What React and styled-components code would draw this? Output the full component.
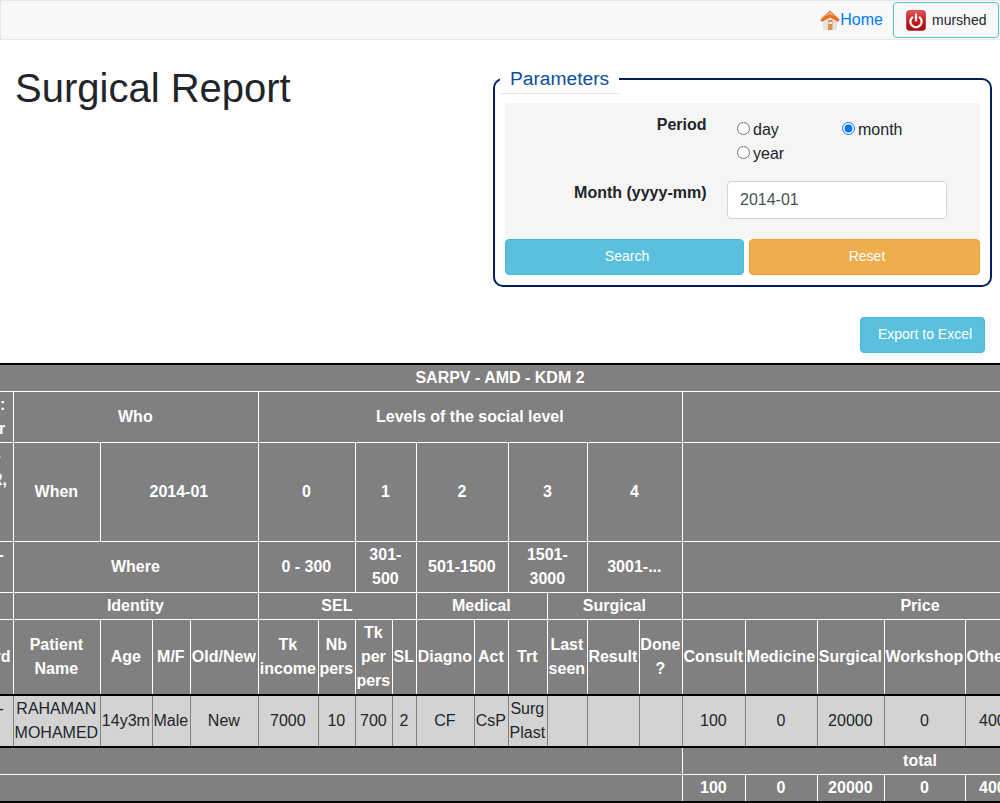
import React from 'react';
import styled, { createGlobalStyle } from 'styled-components';

const GlobalStyle = createGlobalStyle`
  html, body {
    margin: 0;
    height: 100%;
    overflow: hidden;
    background: #fff;
  }
  body {
    font-family: "Liberation Sans", Arial, sans-serif;
    font-size: 16px;
    line-height: 24px;
    color: #212529;
  }
  * {
    box-sizing: border-box;
  }
`;

const NavBar = styled.nav`
  display: flex;
  justify-content: flex-end;
  align-items: center;
  height: 40px;
  padding-right: 1px;
  background: #f8f8f8;
  border: 1px solid #e7e7e7;
  border-right: 0;
`;

const HomeLink = styled.a`
  display: flex;
  align-items: center;
  color: #007bff;
  margin-right: 10px;
`;

const UserButton = styled.button`
  display: flex;
  align-items: center;
  gap: 6px;
  width: 106px;
  height: 36px;
  padding: 0 0 0 12px;
  background: #f8f8f8;
  border: 1px solid #5bc0de;
  border-radius: 4px;
  font: 14px/20px "Liberation Sans", Arial, sans-serif;
  color: #212529;
`;

const Top = styled.section`
  display: flex;
  justify-content: space-between;
  align-items: flex-start;
  padding: 24px 8px 0 15px;
`;

const Title = styled.h1`
  margin: 0;
  font-size: 40px;
  font-weight: 400;
  line-height: 48px;
`;

const Parameters = styled.fieldset`
  width: 499px;
  min-width: 0;
  margin: 0;
  padding: 0 10px 10px;
  border: 2px solid #002060;
  border-radius: 10px;
`;

const Legend = styled.legend`
  margin-left: -5px;
  margin-bottom: 9px;
  padding: 0 10px;
  font-size: 19.2px;
  line-height: 29px;
  color: #0b4f9c;
  border-bottom: 1px solid #e5e5e5;
`;

const FormPanel = styled.div`
  display: grid;
  grid-template-columns: 201.5px 1fr;
  column-gap: 20.5px;
  row-gap: 15px;
  padding: 9px 0 20px;
  background: #f5f5f5;
`;

const FieldLabel = styled.label`
  text-align: right;
  font-weight: 700;
  margin-top: ${(props) => props.$top || 0}px;
`;

const RadioGroup = styled.div`
  display: flex;
  flex-wrap: wrap;
  width: 220px;
  padding-top: 6px;
`;

const RadioOption = styled.label`
  display: flex;
  align-items: center;
  width: 105px;
  height: 24px;
  padding-left: 10px;

  input {
    width: 13px;
    height: 13px;
    margin: 0 3px 4px 0;
  }
`;

const TextInput = styled.input`
  display: block;
  width: 220px;
  height: 38px;
  padding: 6px 12px;
  background: #fff;
  border: 1px solid #ced4da;
  border-radius: 4px;
  font: 16px/24px "Liberation Sans", Arial, sans-serif;
  color: #495057;
`;

const ButtonRow = styled.div`
  display: flex;
  gap: 5px;
`;

const ActionButton = styled.button`
  width: ${(props) => props.$width}px;
  height: 36px;
  padding: 0 0 2px 5px;
  color: #fff;
  background: ${(props) => (props.$warning ? '#f0ad4e' : '#5bc0de')};
  border: 1px solid ${(props) => (props.$warning ? '#eea236' : '#46b8da')};
  border-radius: 4px;
  font: 14px/20px "Liberation Sans", Arial, sans-serif;
`;

const ExportRow = styled.div`
  display: flex;
  justify-content: flex-end;
  padding: 30px 15px 10px 0;
`;

const TableWrap = styled.div`
  display: flex;
  justify-content: center;
  padding-left: 2px;
`;

const Report = styled.table`
  flex: none;
  width: 1316px;
  table-layout: fixed;
  border-collapse: collapse;
  border-top: 2px solid #000;
  border-bottom: 2px solid #000;
  text-align: center;
`;

const HeadCell = styled.th`
  padding: 1px 2px 1px 0;
  background: #808080;
  color: #fff;
  font-weight: 700;
  border: 1px solid #fff;
  border-top-color: ${(props) => (props.$first ? '#000' : '#fff')};
  border-top-width: ${(props) => (props.$first ? 2 : 1)}px;
`;

const PlainCell = styled(HeadCell)`
  border-left-color: #808080;
  border-right-color: ${(props) => (props.$closed ? '#fff' : '#808080')};
`;

const DataRow = styled.tr`
  border-top: 2px solid #000;
  border-bottom: 2px solid #000;
`;

const DataCell = styled.td`
  padding: 1px 2px 1px 0;
  background: #d3d3d3;
  color: #212529;
  border-left: 1px solid #808080;
  border-right: 1px solid #808080;
`;

const colWidths = [130, 41, 87, 52, 38, 68, 60, 37, 37, 24, 58, 34, 39, 40, 52, 43, 63, 72, 67, 81, 55, 138];

const columnTitles = [
  '', 'Card', <>Patient<br />Name</>, 'Age', 'M/F', 'Old/New', <>Tk<br />income</>, <>Nb<br />pers</>,
  <>Tk<br />per<br />pers</>, 'SL', 'Diagno', 'Act', 'Trt', <>Last<br />seen</>, 'Result', <>Done<br />?</>,
  'Consult', 'Medicine', 'Surgical', 'Workshop', 'Others', 'Total',
];

const patient = [
  '', <>01-<br />2</>, <>RAHAMAN<br />MOHAMED</>, '14y3m', 'Male', 'New', '7000', '10', '700', '2', 'CF', 'CsP',
  <>Surg<br />Plast</>, '', '', '', '100', '0', '20000', '0', '400', '20500',
];

const levels = [
  ['0', '0 - 300'],
  ['1', <>301-<br />500</>],
  ['2', '501-1500'],
  ['3', <>1501-<br />3000</>],
  ['4', '3001-...'],
];

const HomeIcon = () => (
  <svg width="20" height="20" viewBox="0 0 20 20">
    <path d="M3 10 L10 6 L17 10 V18.5 Q17 20 15.5 20 H4.5 Q3 20 3 18.5 Z" fill="#e6e3de" />
    <path d="M8 10 H12.5 V20 H8 Z" fill="#d98f55" />
    <path d="M8.5 12 H12 V14 H8.5 Z" fill="#f1ebe4" />
    <path d="M10 0.5 L19.5 9.5 L18.5 12 L10 7.5 L1.5 12 L0.5 9.5 Z" fill="#ee6c22" />
    <path d="M10 1.5 L15 6.5 L10 4.5 L5 6.5 Z" fill="#fca26a" />
  </svg>
);

const PowerIcon = () => (
  <svg width="20" height="21" viewBox="0 0 20 21">
    <defs>
      <linearGradient id="powerFill" x1="0" y1="0" x2="0" y2="1">
        <stop offset="0" stopColor="#e8585c" />
        <stop offset="0.45" stopColor="#cc1a20" />
        <stop offset="1" stopColor="#a80c10" />
      </linearGradient>
    </defs>
    <rect x="0.5" y="0.5" width="19" height="20" rx="3" fill="url(#powerFill)" stroke="#98282a" strokeWidth="0.6" />
    <path d="M6.4 7.4 A5.6 5.6 0 1 0 13.6 7.4" fill="none" stroke="#fff" strokeWidth="2.2" strokeLinecap="round" />
    <path d="M10 4.5 V10.5" fill="none" stroke="#fff" strokeWidth="2.2" strokeLinecap="round" />
  </svg>
);

const App = () => (
  <>
    <GlobalStyle />
    <NavBar>
      <HomeLink><HomeIcon />Home</HomeLink>
      <UserButton><PowerIcon />murshed</UserButton>
    </NavBar>

    <Top>
      <Title>Surgical Report</Title>
      <Parameters>
        <Legend>Parameters</Legend>
        <FormPanel>
          <FieldLabel $top={1}>Period</FieldLabel>
          <RadioGroup>
            <RadioOption><input type="radio" name="period" />day</RadioOption>
            <RadioOption><input type="radio" name="period" defaultChecked />month</RadioOption>
            <RadioOption><input type="radio" name="period" />year</RadioOption>
          </RadioGroup>
          <FieldLabel>Month (yyyy-mm)</FieldLabel>
          <TextInput defaultValue="2014-01" />
        </FormPanel>
        <ButtonRow>
          <ActionButton $width={239}>Search</ActionButton>
          <ActionButton $width={231} $warning>Reset</ActionButton>
        </ButtonRow>
      </Parameters>
    </Top>

    <ExportRow>
      <ActionButton $width={125}>Export to Excel</ActionButton>
    </ExportRow>

    <TableWrap>
      <Report>
        <colgroup>
          {colWidths.map((width, index) => (
            <col key={index} style={{ width }} />
          ))}
        </colgroup>
        <thead>
          <tr>
            <HeadCell $first colSpan={22}>SARPV - AMD - KDM 2</HeadCell>
          </tr>
          <tr>
            <HeadCell />
            <HeadCell>ID :<br />Per</HeadCell>
            <HeadCell colSpan={4}>Who</HeadCell>
            <HeadCell colSpan={10}>Levels of the social level</HeadCell>
            <HeadCell colSpan={6} />
          </tr>
          <tr>
            <HeadCell />
            <HeadCell>A-<br />MR,<br />&nbsp;<br />&nbsp;</HeadCell>
            <HeadCell>When</HeadCell>
            <HeadCell colSpan={3}>2014-01</HeadCell>
            {levels.map(([level]) => (
              <HeadCell key={level} colSpan={2}>{level}</HeadCell>
            ))}
            <HeadCell colSpan={6} />
          </tr>
          <tr>
            <HeadCell />
            <HeadCell>10-<br />2</HeadCell>
            <HeadCell colSpan={4}>Where</HeadCell>
            {levels.map(([level, range]) => (
              <HeadCell key={level} colSpan={2}>{range}</HeadCell>
            ))}
            <HeadCell colSpan={6} />
          </tr>
          <tr>
            <HeadCell colSpan={2} />
            <HeadCell colSpan={4}>Identity</HeadCell>
            <HeadCell colSpan={4}>SEL</HeadCell>
            <HeadCell colSpan={3}>Medical</HeadCell>
            <HeadCell colSpan={3}>Surgical</HeadCell>
            <HeadCell colSpan={6}>Price</HeadCell>
          </tr>
          <tr>
            {columnTitles.map((title, index) => (
              <HeadCell key={index}>{title}</HeadCell>
            ))}
          </tr>
        </thead>
        <tbody>
          <DataRow>
            {patient.map((value, index) => (
              <DataCell key={index}>{value}</DataCell>
            ))}
          </DataRow>
        </tbody>
        <tfoot>
          <tr>
            <PlainCell colSpan={16} $closed>&nbsp;</PlainCell>
            <HeadCell colSpan={6}>total</HeadCell>
          </tr>
          <tr>
            <PlainCell colSpan={16} $closed>&nbsp;</PlainCell>
            <HeadCell>100</HeadCell>
            <HeadCell>0</HeadCell>
            <HeadCell>20000</HeadCell>
            <HeadCell>0</HeadCell>
            <HeadCell>400</HeadCell>
            <HeadCell>20500</HeadCell>
          </tr>
        </tfoot>
      </Report>
    </TableWrap>
  </>
);

export default App;
